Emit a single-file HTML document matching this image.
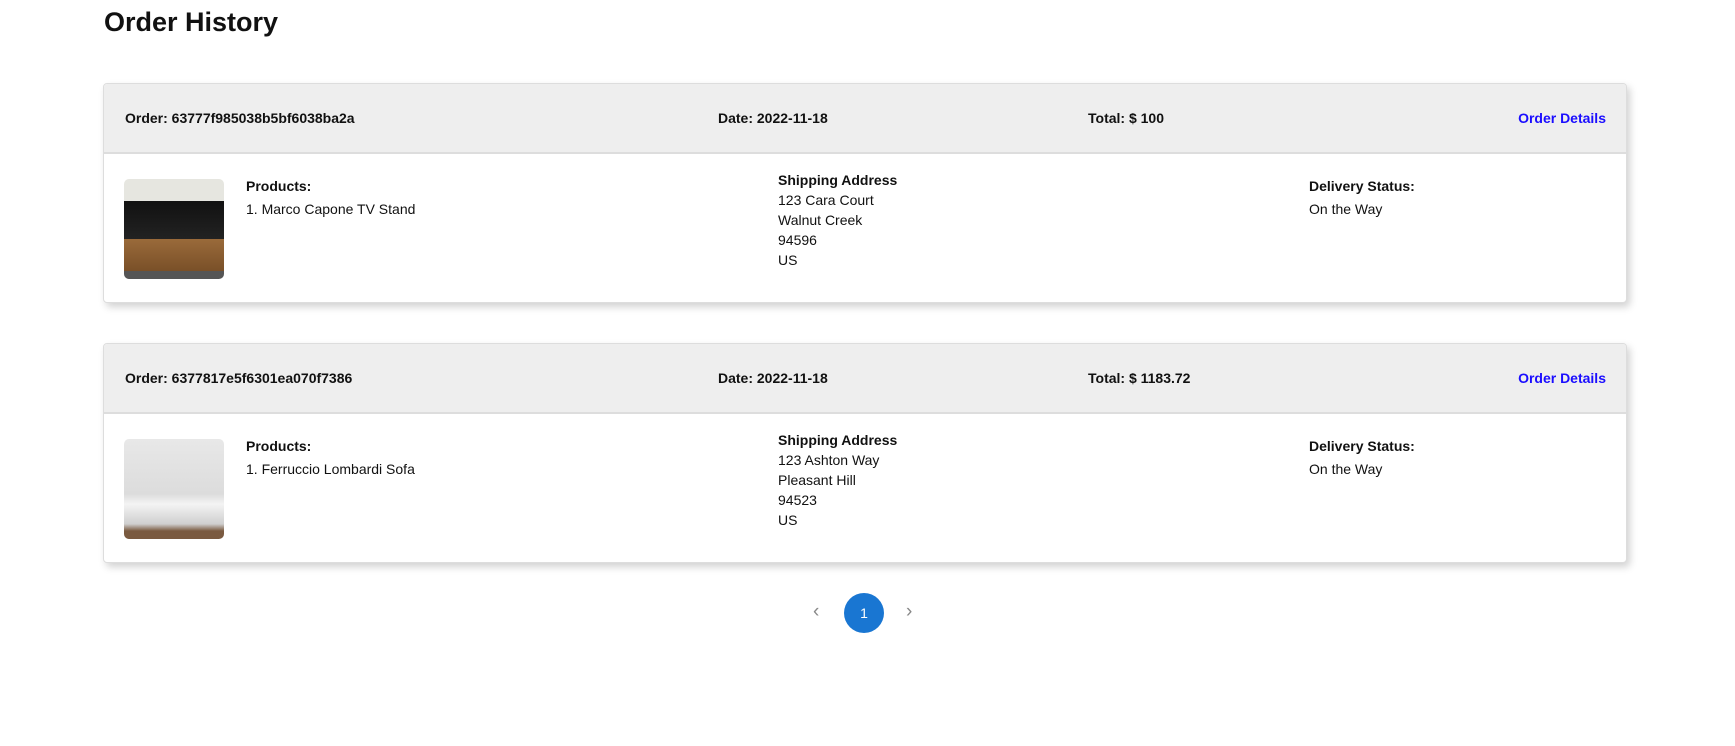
<!DOCTYPE html>
<html><head><style>
body{margin:0;background:#fff;font-family:"Liberation Sans",sans-serif;color:#111;width:1735px;height:746px;overflow:hidden;position:relative}
h1{position:absolute;left:104px;top:7px;margin:0;font-size:27px;font-weight:bold}
.card{position:absolute;left:103px;width:1522px;height:218px;border:1px solid #ddd;border-radius:4px;box-shadow:3px 4px 8px rgba(0,0,0,.18);background:#fff;overflow:hidden}
.hd{height:68px;background:#eee;border-bottom:2px solid #ddd;position:relative;font-size:14px;font-weight:bold}
.hd span{position:absolute;top:26px}
.hd a{position:absolute;right:20px;top:26px;color:#1a0dff;text-decoration:none}
.bd{position:relative;font-size:14px;line-height:20px}
.bd div{position:absolute}
b{font-weight:bold}
.img{width:100px;height:100px;border-radius:5px;left:20px;top:25px}
.pg{position:absolute;top:593px;left:844px;width:40px;height:40px;border-radius:50%;background:#1976d2;color:#fff;font-size:14px;text-align:center;line-height:40px}
.ch{position:absolute;top:601px;color:#888;font-size:19px}
</style></head><body>
<h1>Order History</h1>
<div class="card" style="top:83px">
<div class="hd"><span style="left:21px">Order: 63777f985038b5bf6038ba2a</span><span style="left:614px">Date: 2022-11-18</span><span style="left:984px">Total: $ 100</span><a>Order Details</a></div>
<div class="bd">
<div class="img" style="background:linear-gradient(#e6e6e0 0,#e6e6e0 22%,#111 22%,#222 60%,#9a6a3a 60%,#7a5028 92%,#555 92%)"></div>
<div style="left:142px;top:22px"><b>Products:</b><br><span style="line-height:26px">1. Marco Capone TV Stand</span></div>
<div style="left:674px;top:16px"><b>Shipping Address</b><br>123 Cara Court<br>Walnut Creek<br>94596<br>US</div>
<div style="left:1205px;top:22px"><b>Delivery Status:</b><br><span style="line-height:26px">On the Way</span></div>
</div></div>
<div class="card" style="top:343px">
<div class="hd"><span style="left:21px">Order: 6377817e5f6301ea070f7386</span><span style="left:614px">Date: 2022-11-18</span><span style="left:984px">Total: $ 1183.72</span><a>Order Details</a></div>
<div class="bd">
<div class="img" style="background:linear-gradient(#e8e8e8 0,#dcdcdc 55%,#f4f4f4 65%,#cfcfcf 85%,#7a5a40 92%)"></div>
<div style="left:142px;top:22px"><b>Products:</b><br><span style="line-height:26px">1. Ferruccio Lombardi Sofa</span></div>
<div style="left:674px;top:16px"><b>Shipping Address</b><br>123 Ashton Way<br>Pleasant Hill<br>94523<br>US</div>
<div style="left:1205px;top:22px"><b>Delivery Status:</b><br><span style="line-height:26px">On the Way</span></div>
</div></div>
<div class="ch" style="left:813px">‹</div>
<div class="pg">1</div>
<div class="ch" style="left:906px">›</div>
</body></html>
